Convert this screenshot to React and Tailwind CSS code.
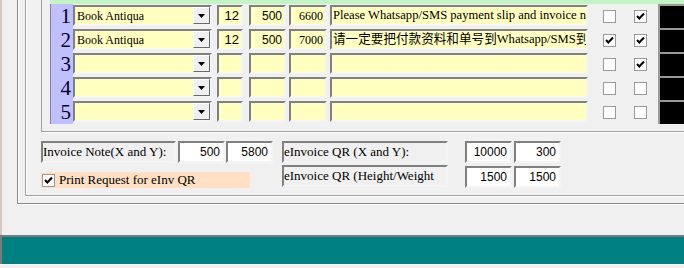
import React from 'react';

const serif = "font-['Liberation_Serif','Noto_Sans_CJK_SC',serif]";
const sans = "font-['Liberation_Sans',sans-serif]";
const sunk = "border-2 border-t-[#808080] border-l-[#808080] border-r-[#f4f4f4] border-b-[#f4f4f4]";

const rows = [
    { n: 1, font: 'Book Antiqua', size: '12', x: '500', y: '6600', text: 'Please Whatsapp/SMS payment slip and invoice no.', c1: false, c2: true },
    { n: 2, font: 'Book Antiqua', size: '12', x: '500', y: '7000', text: '请一定要把付款资料和单号到Whatsapp/SMS到 (', c1: true, c2: true },
    { n: 3, c1: false, c2: true },
    { n: 4, c1: false, c2: false },
    { n: 5, c1: false, c2: false },
];

function Check({ on }) {
    return (
        <div className="w-[13px] h-[13px] border border-[#9a9a9a] bg-white flex items-center justify-center shrink-0">
            {on && (
                <svg width="11" height="11" viewBox="0 0 11 11">
                    <polyline points="2,5 4.3,7.5 9,2.5" fill="none" stroke="#000" strokeWidth="2" />
                </svg>
            )}
        </div>
    );
}

function Combo({ value }) {
    return (
        <div className={`w-[139px] h-[21px] ${sunk} bg-[#ffffc0] flex items-center`}>
            <span className={`flex-1 pl-[2px] text-[12px] leading-none ${serif} text-black`}>{value}</span>
            <div className="w-[17px] h-[17px] bg-[#f0f0f0] border border-t-white border-l-white border-r-[#696969] border-b-[#696969] flex items-center justify-center">
                <svg width="8" height="5" viewBox="0 0 8 5" className="mt-[1px]">
                    <polygon points="0,0 7,0 3.5,4" fill="#000" />
                </svg>
            </div>
        </div>
    );
}

function Cell({ w, children, font = sans, size = 'text-[12px]', align = 'justify-end pr-[2px]' }) {
    return (
        <div className={`${w} h-[21px] ${sunk} bg-[#ffffc0] flex items-center ${align} overflow-hidden whitespace-nowrap ${font} ${size} leading-none text-black`}>
            {children}
        </div>
    );
}

function Field({ w, children }) {
    return (
        <div className={`${w} h-[22px] ${sunk} bg-white flex items-center justify-end pr-[3px] ${sans} text-[12px] text-black`}>
            {children}
        </div>
    );
}

function Label({ w, children }) {
    return (
        <div className={`${w} h-[22px] ${sunk} bg-[#f0f0f0] flex items-center ${serif} text-[13px] text-black whitespace-nowrap overflow-hidden`}>
            {children}
        </div>
    );
}

export default function App() {
    return (
        <div className="w-[684px] h-[268px] bg-[#f0f0f0] overflow-hidden flex flex-col">
            <div className="h-[235px] flex">
                <div className="w-[2px] bg-[#d2cac2]" />
                <div className="ml-[15px] flex-1 h-[204px] border-l border-b border-[#8a8a8a] shadow-[inset_1px_0_0_#fff,0_1px_0_#fff] flex">
                    <div className="ml-[7px] flex-1 h-[196px] border-l border-b border-[#a0a0a0] shadow-[inset_1px_0_0_#fff,0_1px_0_#fff] flex flex-col">
                        {/* table */}
                        <div className="ml-[15px] h-[132px] border-l border-b border-[#a0a0a0] shadow-[0_1px_0_#fff] pl-[8px]">
                            <div className="h-[4px] bg-[#c4f4c4]" />
                            {rows.map((r) => (
                                <div key={r.n} className="h-[24px] flex">
                                    <div className={`w-[23px] bg-[#c0c0ff] border-l border-[#8080a0] flex items-center justify-end pr-[2px] ${serif} text-[21px] leading-none text-[#000030]`}>
                                        {r.n}
                                    </div>
                                    <div className="mt-[1px] flex">
                                        <Combo value={r.font} />
                                        <div className="ml-[5px]"><Cell w="w-[26px]" size="text-[13px]">{r.size}</Cell></div>
                                        <div className="ml-[6px]"><Cell w="w-[37px]">{r.x}</Cell></div>
                                        <div className="ml-[3px]"><Cell w="w-[38px]" font={serif} size="text-[12px]">{r.y}</Cell></div>
                                        <div className="ml-[3px]">
                                            <Cell w="w-[258px]" font={serif} size="text-[12.6px]" align="justify-start pl-[1px]">{r.text}</Cell>
                                        </div>
                                    </div>
                                    <div className="ml-[15px] flex items-center">
                                        <Check on={r.c1} />
                                        <div className="ml-[18px]"><Check on={r.c2} /></div>
                                    </div>
                                    <div className="ml-[11px] flex-1 bg-black border-l-2 border-t-2 border-[#9a9a9a]" />
                                </div>
                            ))}
                        </div>

                        {/* lower settings */}
                        <div className="ml-[15px] mt-[9px] flex">
                            <div className="flex flex-col">
                                <div className="flex">
                                    <Label w="w-[135px]">Invoice Note(X and Y):</Label>
                                    <div className="ml-[2px]"><Field w="w-[47px]">500</Field></div>
                                    <div className="ml-[1px]"><Field w="w-[47px]">5800</Field></div>
                                </div>
                                <div className={`mt-[9px] w-[209px] h-[16px] bg-[#ffe0c4] flex items-center pl-[1px] ${serif} text-[13px] text-black`}>
                                    <Check on />
                                    <span className="ml-[4px]">Print Request for eInv QR</span>
                                </div>
                            </div>
                            <div className="ml-[9px] flex flex-col gap-[2px]">
                                <Label w="w-[166px]">eInvoice QR (X and Y):</Label>
                                <Label w="w-[166px]">eInvoice QR (Height/Weight</Label>
                            </div>
                            <div className="ml-[17px] grid grid-cols-[47px_47px] gap-x-[2px] gap-y-[2px]">
                                <Field w="w-[47px]">10000</Field>
                                <Field w="w-[47px]">300</Field>
                                <Field w="w-[47px]">1500</Field>
                                <Field w="w-[47px]">1500</Field>
                            </div>
                        </div>
                    </div>
                </div>
            </div>
            <div className="h-[29px] border-t-2 border-l-2 border-[#7a7a7a] bg-[#008080]" />
            <div className="h-px bg-white" />
        </div>
    );
}
